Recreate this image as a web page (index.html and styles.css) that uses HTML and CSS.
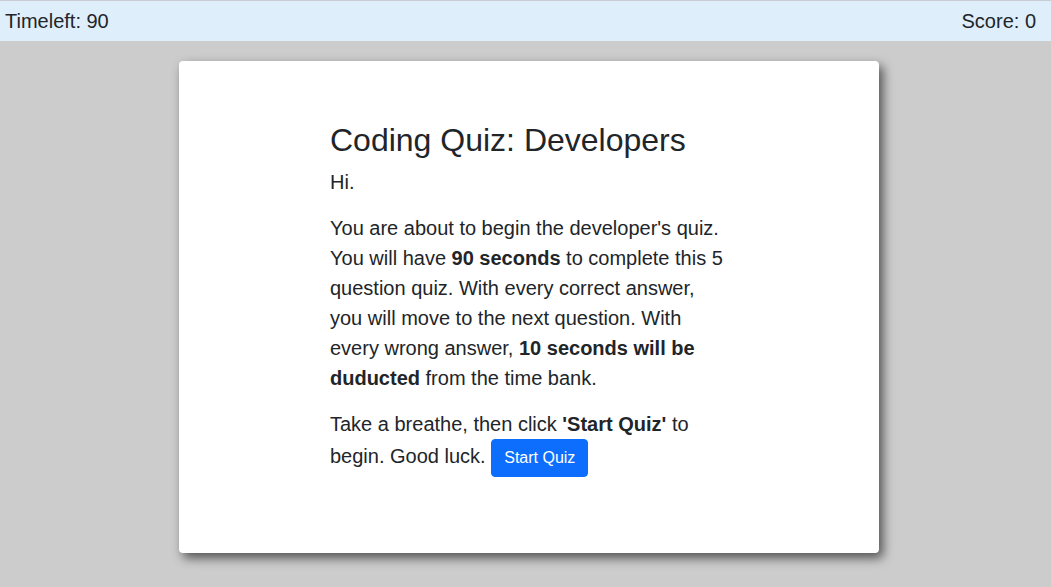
FILE: index.html
```html
<!DOCTYPE html>
<html lang="en">
<head>
<meta charset="utf-8">
<title>Coding Quiz</title>
<link rel="stylesheet" href="styles.css">
</head>
<body>
<header class="status-bar">
  <span class="timeleft">Timeleft: 90</span>
  <span class="score">Score: 0</span>
</header>
<main class="stage">
  <section class="card">
    <div class="card-content">
      <h2 class="title">Coding Quiz: Developers</h2>
      <p class="lead">Hi.</p>
      <p class="lead">You are about to begin the developer's quiz. You will have <strong>90 seconds</strong> to complete this 5 question quiz. With every correct answer, you will move to the next question. With every wrong answer, <strong>10 seconds will be duducted</strong> from the time bank.</p>
      <p class="lead">Take a breathe, then click <strong>'Start Quiz'</strong> to begin. Good luck. <button class="btn-start" type="button">Start Quiz</button></p>
    </div>
  </section>
</main>
</body>
</html>
```

FILE: styles.css
```css
* { box-sizing: border-box; }

html, body {
  margin: 0;
  padding: 0;
}

body {
  background: #cccccc;
  color: #212529;
  font-family: "Liberation Sans", Arial, Helvetica, sans-serif;
  font-size: 16px;
  line-height: 1.5;
  min-height: 587px;
}

.status-bar {
  display: flex;
  justify-content: space-between;
  align-items: center;
  background: #dfeefb;
  border-top: 1px solid #c9ccd0;
  padding: 5px 15px 5px 5px;
  font-size: 20px;
  line-height: 30px;
}

.stage {
  display: flex;
  justify-content: center;
  padding: 20px 0 0 7px;
}

.card {
  width: 700px;
  background: #ffffff;
  border-radius: 4px;
  box-shadow: 4px 5px 11px rgba(0, 0, 0, 0.6);
  padding: 60px 149px 60px 151px;
}

.card-content {
  width: 400px;
}

.title {
  font-size: 32px;
  font-weight: 400;
  line-height: 1.2;
  margin: 0 0 8px;
}

.lead {
  font-size: 20px;
  line-height: 30px;
  margin: 0 0 16px;
}

.lead strong {
  font-weight: 700;
}

.btn-start {
  display: inline-block;
  vertical-align: middle;
  font-family: "Liberation Sans", Arial, Helvetica, sans-serif;
  font-size: 16px;
  line-height: 24px;
  color: #ffffff;
  background: #0d6efd;
  border: 1px solid #0d6efd;
  border-radius: 4px;
  padding: 6px 12px;
  cursor: pointer;
}
```
